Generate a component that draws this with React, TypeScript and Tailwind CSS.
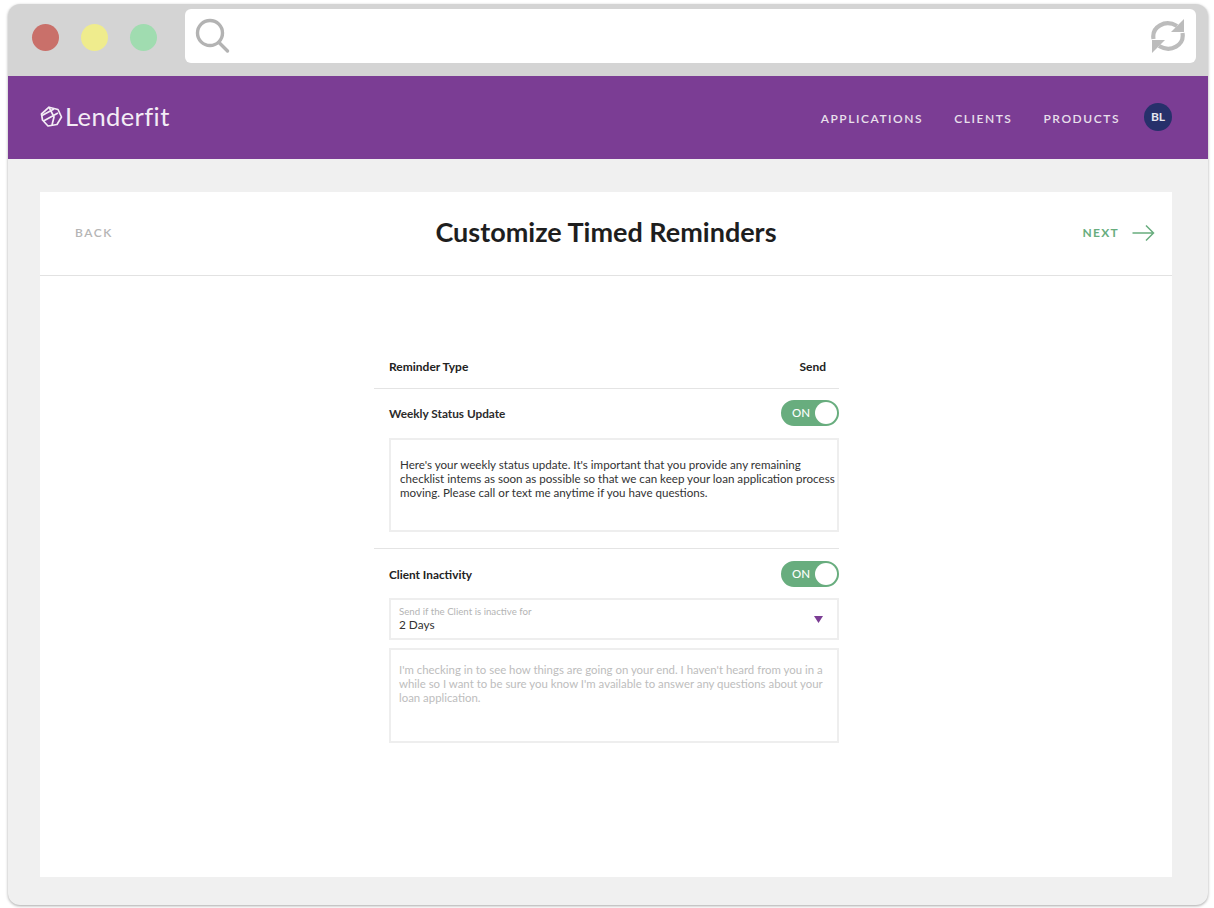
import React from 'react';

const LogoMark = () => (
  <svg width="23" height="22" viewBox="0 0 23 22" fill="none" stroke="currentColor" strokeWidth="1.7" strokeLinejoin="round">
    <path d="M9 1.2 L18 3.5 L21.5 11 L17 18.5 L8 20 L2.5 14 L1.5 8 Z" />
    <path d="M2 9.5 L14 3 M3.5 15 L18 7 M9 1.2 L14 11 L12 19" />
  </svg>
);

const Toggle = ({ className = '' }: { className?: string }) => (
  <div className={`flex h-[26px] w-[58px] items-center justify-between rounded-full border-2 border-[#68ad7e] bg-[#68ad7e] pl-[9px] ${className}`}>
    <span className="text-[11.5px] font-medium text-white">ON</span>
    <span className="h-[22px] w-[22px] rounded-full bg-white" />
  </div>
);

const App = () => {
  return (
    <div className="h-[908px] w-[1214px] overflow-hidden bg-white pt-[4px] pl-[8px] font-['Lato',sans-serif]">
      <div className="flex h-[901px] w-[1200px] flex-col overflow-hidden rounded-[12px] bg-[#f0f0f0] shadow-[0_1px_3px_rgba(0,0,0,0.35)]">
        {/* browser chrome */}
        <div className="flex h-[72px] shrink-0 items-start bg-[#d4d4d4] pt-[5px] pr-[12px] pl-[24px]">
          <div className="mt-[15px] flex gap-[22px]">
            <span className="h-[27px] w-[27px] rounded-full bg-[#c9706a]" />
            <span className="h-[27px] w-[27px] rounded-full bg-[#efec8d]" />
            <span className="h-[27px] w-[27px] rounded-full bg-[#a0dcb0]" />
          </div>
          <div className="ml-[28px] flex h-[54px] flex-1 items-center justify-between rounded-[6px] bg-white pr-[10px] pl-[10px]">
            <svg width="36" height="36" viewBox="0 0 36 36" fill="none" stroke="#b3b3b3" strokeWidth="3.4" strokeLinecap="round">
              <circle cx="15" cy="15" r="12.5" />
              <path d="M24 24.5 L32.5 33" />
            </svg>
            <svg width="36" height="36" viewBox="0 0 36 36" fill="none" stroke="#bcbcbc" strokeWidth="4.2">
              <path d="M3.5 21 C1.5 9 15 1 27 8" />
              <path d="M32.5 15 C34.5 27 21 35 9 28" />
              <path d="M34 1 V14 H21 Z" fill="#bcbcbc" stroke="none" />
              <path d="M2 35 V22 H15 Z" fill="#bcbcbc" stroke="none" />
            </svg>
          </div>
        </div>

        {/* app header */}
        <div className="flex h-[83px] shrink-0 items-center justify-between bg-[#7b3d94] pr-[36px] pl-[32px]">
          <div className="-mt-[2px] flex items-center gap-[2px] text-[#f3ecf5]">
            <LogoMark />
            <span className="text-[25.5px] leading-none font-normal tracking-[0.4px] [font-variant-ligatures:none]">Lenderfit</span>
          </div>
          <div className="flex items-center text-[12px] font-semibold tracking-[1.55px] text-[#e9e0ec]">
            <span className="mt-[2px]">APPLICATIONS</span>
            <span className="mt-[2px] ml-[31px]">CLIENTS</span>
            <span className="mt-[2px] ml-[31px]">PRODUCTS</span>
            <span className="-mt-[2px] ml-[24px] flex h-[28px] w-[28px] items-center justify-center rounded-full bg-[#27306b] text-[12px] font-bold tracking-normal text-[#e6e6ef]">BL</span>
          </div>
        </div>

        {/* card */}
        <div className="mt-[33px] ml-[32px] flex h-[685px] w-[1132px] flex-col bg-white">
          <div className="flex h-[84px] shrink-0 items-center justify-between border-b border-[#e2e2e2] pr-[17px] pb-[2px] pl-[35px]">
            <span className="w-[120px] text-[12px] font-semibold tracking-[1.5px] text-[#b5b5b5]">BACK</span>
            <h1 className="text-[27px] font-bold text-[#1e1e1e]">Customize Timed Reminders</h1>
            <div className="flex w-[138px] items-center justify-end gap-[13px] text-[#68ad7e]">
              <span className="text-[12px] font-bold tracking-[1.3px]">NEXT</span>
              <svg width="23" height="18" viewBox="0 0 23 18" fill="none" stroke="currentColor" strokeWidth="1.5">
                <path d="M0.5 9 H21.5 M14 1.5 L21.5 9 L14 16.5" />
              </svg>
            </div>
          </div>

          <div className="mt-[71px] ml-[334px] w-[465px]">
            <div className="flex h-[42px] items-center justify-between border-b border-[#e4e4e4] pr-[13px] pb-[2px] pl-[15px] text-[12px] font-bold text-[#222222]">
              <span>Reminder Type</span>
              <span>Send</span>
            </div>

            <div className="flex h-[49px] items-center justify-between pl-[15px] text-[11.8px] font-bold text-[#2b2b2b]">
              <span>Weekly Status Update</span>
              <Toggle className="-mt-[1px]" />
            </div>
            <div className="ml-[15px] h-[94px] border-2 border-[#eeeeee] pt-[18px] pl-[9px] text-[11.6px] leading-[14.2px] text-[#333333]">
              Here's your weekly status update. It's important that you provide any remaining checklist intems as soon as possible so that we can keep your loan application process moving. Please call or text me anytime if you have questions.
            </div>
            <div className="mt-[16px] border-b border-[#e4e4e4]" />

            <div className="flex h-[49px] items-center justify-between pl-[15px] text-[11.8px] font-bold text-[#222222]">
              <span className="mt-[2px]">Client Inactivity</span>
              <Toggle />
            </div>
            <div className="ml-[15px] flex h-[42px] items-center justify-between border-2 border-[#eeeeee] pr-[14px] pl-[8px]">
              <div className="-mt-[1px] flex flex-col">
                <span className="text-[9.7px] leading-[12px] text-[#b4b4b4]">Send if the Client is inactive for</span>
                <span className="text-[11.8px] leading-[15px] text-[#333333]">2 Days</span>
              </div>
              <svg width="9" height="7" viewBox="0 0 9 7" fill="#7b3d94">
                <path d="M0 0 H9 L4.5 7 Z" />
              </svg>
            </div>
            <div className="mt-[8px] ml-[15px] h-[95px] border-2 border-[#eeeeee] pt-[13px] pr-[5px] pl-[8px] text-[11.4px] leading-[14.2px] text-[#bdbdbd]">
              I'm checking in to see how things are going on your end. I haven't heard from you in a while so I want to be sure you know I'm available to answer any questions about your loan application.
            </div>
          </div>
        </div>
      </div>
    </div>
  );
};

export default App;
